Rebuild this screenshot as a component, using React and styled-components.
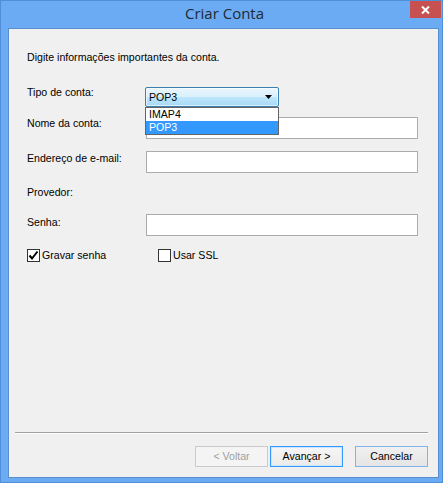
import React from 'react';
import styled, { createGlobalStyle } from 'styled-components';

const GlobalStyle = createGlobalStyle`
  html, body {
    margin: 0;
    padding: 0;
    background: #f0f0f0;
  }
  * {
    box-sizing: border-box;
  }
`;

const Window = styled.div`
  width: 443px;
  height: 483px;
  display: flex;
  flex-direction: column;
  background: #6aabf4;
  border: 1px solid #4f8fd8;
  padding: 0 3px 4px 7px;
  font-family: 'Liberation Sans', Arial, sans-serif;
  font-size: 10.6px;
  color: #000;
`;

const TitleBar = styled.div`
  height: 27px;
  display: grid;
  grid-template-columns: 1fr auto 1fr;
  margin-right: -2px;
`;

const Title = styled.div`
  grid-column: 2;
  font-family: 'Open Sans', 'Noto Sans', sans-serif;
  font-size: 15px;
  line-height: 25px;
  color: #222a33;
`;

const CloseButton = styled.div`
  grid-column: 3;
  justify-self: end;
  align-self: start;
  width: 31px;
  height: 17px;
  background: #c75050;
  display: flex;
  align-items: center;
  justify-content: center;
`;

const Content = styled.div`
  flex: 1;
  display: flex;
  flex-direction: column;
  background: #f0f0f0;
  border: 1px solid #5b8ed0;
  padding: 22px 10px 10px 18px;
`;

const Intro = styled.div`
  line-height: 13px;
  margin-bottom: 22px;
`;

const Row = styled.div`
  display: grid;
  grid-template-columns: 119px 272px;
  align-items: start;
  margin-top: ${(p) => p.$gap || 0}px;
`;

const Label = styled.div`
  line-height: 13px;
  margin-top: ${(p) => p.$offset || 0}px;
`;

const TextBox = styled.div`
  height: 22px;
  background: #fff;
  border: 1px solid #ababab;
`;

const Combo = styled.div`
  position: relative;
  margin-left: -1px;
  margin-top: 1px;
  width: 134px;
  height: 20px;
  border: 1px solid #3c7fb1;
  border-radius: 2px;
  background: linear-gradient(#eaf6fd 0%, #d9f0fc 48%, #bee6fd 52%, #a7d9f5 100%);
  box-shadow: inset 0 0 0 1px rgba(255, 255, 255, 0.6);
  display: flex;
  align-items: center;
  justify-content: space-between;
  padding: 0 6px 0 3px;
  z-index: 2;
`;

const ComboText = styled.span`
  line-height: 13px;
`;

const DropList = styled.div`
  position: absolute;
  top: 19px;
  left: -1px;
  width: 134px;
  background: #fff;
  border: 1px solid #646464;
`;

const ListItem = styled.div`
  height: 13px;
  line-height: 13px;
  padding-left: 3px;
  background: ${(p) => (p.$selected ? '#3399ff' : '#fff')};
  color: ${(p) => (p.$selected ? '#fff' : '#000')};
`;

const CheckRow = styled.div`
  display: flex;
  align-items: center;
  margin-top: 13px;
`;

const CheckLabel = styled.label`
  display: flex;
  align-items: center;
  gap: 2px;
  width: ${(p) => p.$width}px;
  line-height: 13px;
`;

const Box = styled.span`
  width: 13px;
  height: 13px;
  background: #fff;
  border: 1px solid #333;
  display: flex;
  align-items: center;
  justify-content: center;
`;

const Spacer = styled.div`
  flex: 1;
`;

const Separator = styled.div`
  margin: 0 0 12px -12px;
  border-top: 1px solid #a0a0a0;
  border-bottom: 1px solid #fff;
`;

const ButtonBar = styled.div`
  display: flex;
  justify-content: flex-end;
  gap: 2px;
`;

const Button = styled.div`
  width: 73px;
  height: 21px;
  display: flex;
  align-items: center;
  justify-content: center;
  line-height: 13px;
  margin-left: ${(p) => p.$gapLeft || 0}px;
  border: 1px solid ${(p) => (p.$disabled ? '#cacaca' : p.$default ? '#3399ff' : '#7eb4ea')};
  color: ${(p) => (p.$disabled ? '#a0a0a0' : '#000')};
  background: ${(p) =>
    p.$disabled ? '#f4f4f4' : p.$default ? 'linear-gradient(#f6f6f6, #ebebeb)' : 'linear-gradient(#f0f0f0, #e5e5e5)'};
  box-shadow: ${(p) => (p.$default ? 'inset 0 0 0 1px #cde6ff' : 'none')};
`;

const CheckMark = () => (
  <svg width="11" height="11" viewBox="0 0 11 11">
    <path d="M1.5 5.5 L4 8.5 L9.5 1.5" fill="none" stroke="#000" strokeWidth="2" />
  </svg>
);

const App = () => (
  <>
    <GlobalStyle />
    <Window>
      <TitleBar>
        <Title>Criar Conta</Title>
        <CloseButton>
          <svg width="9" height="8" viewBox="0 0 9 8">
            <path d="M1 0.5 L8 7.5 M8 0.5 L1 7.5" stroke="#fff" strokeWidth="2" />
          </svg>
        </CloseButton>
      </TitleBar>
      <Content>
        <Intro>Digite informações importantes da conta.</Intro>
        <Row>
          <Label>Tipo de conta:</Label>
          <Combo>
            <ComboText>POP3</ComboText>
            <svg width="7" height="4" viewBox="0 0 7 4">
              <path d="M0 0 H7 L3.5 4 Z" fill="#000" />
            </svg>
            <DropList>
              <ListItem>IMAP4</ListItem>
              <ListItem $selected>POP3</ListItem>
            </DropList>
          </Combo>
        </Row>
        <Row $gap={10}>
          <Label>Nome da conta:</Label>
          <TextBox />
        </Row>
        <Row $gap={12}>
          <Label $offset={1}>Endereço de e-mail:</Label>
          <TextBox />
        </Row>
        <Row $gap={13}>
          <Label>Provedor:</Label>
        </Row>
        <Row $gap={15}>
          <Label $offset={2}>Senha:</Label>
          <TextBox />
        </Row>
        <CheckRow>
          <CheckLabel $width={131}>
            <Box>
              <CheckMark />
            </Box>
            Gravar senha
          </CheckLabel>
          <CheckLabel>
            <Box />
            Usar SSL
          </CheckLabel>
        </CheckRow>
        <Spacer />
        <Separator />
        <ButtonBar>
          <Button $disabled>&lt; Voltar</Button>
          <Button $default>Avançar &gt;</Button>
          <Button $gapLeft={10}>Cancelar</Button>
        </ButtonBar>
      </Content>
    </Window>
  </>
);

export default App;
